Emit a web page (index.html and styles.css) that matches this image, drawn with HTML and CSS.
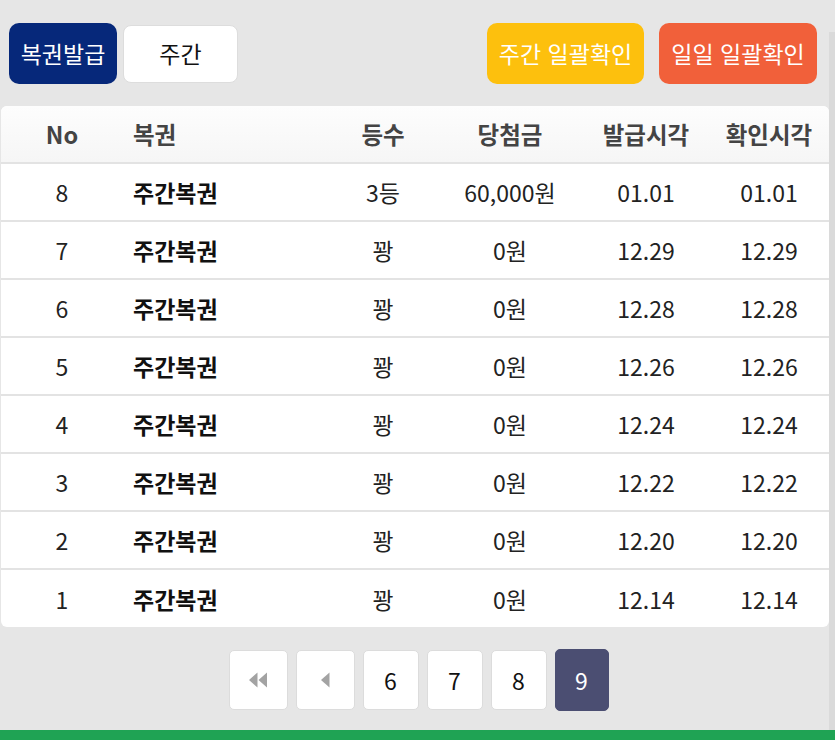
FILE: index.html
```html
<!DOCTYPE html>
<html lang="ko">
<head>
<meta charset="utf-8">
<link rel="stylesheet" href="styles.css">
</head>
<body>
<div class="page">
  <div class="main">
    <div class="toolbar">
      <div class="group">
        <button class="btn btn-navy">복권발급</button>
        <button class="btn btn-white">주간</button>
      </div>
      <div class="group group-right">
        <button class="btn btn-yellow">주간 일괄확인</button>
        <button class="btn btn-orange">일일 일괄확인</button>
      </div>
    </div>

    <div class="table">
      <div class="row head">
        <div class="c c1">No</div>
        <div class="c c2">복권</div>
        <div class="c c3">등수</div>
        <div class="c c4">당첨금</div>
        <div class="c c5">발급시각</div>
        <div class="c c6">확인시각</div>
      </div>
      <div class="row"><div class="c c1">8</div><div class="c c2 name">주간복권</div><div class="c c3">3등</div><div class="c c4">60,000원</div><div class="c c5">01.01</div><div class="c c6">01.01</div></div>
      <div class="row"><div class="c c1">7</div><div class="c c2 name">주간복권</div><div class="c c3">꽝</div><div class="c c4">0원</div><div class="c c5">12.29</div><div class="c c6">12.29</div></div>
      <div class="row"><div class="c c1">6</div><div class="c c2 name">주간복권</div><div class="c c3">꽝</div><div class="c c4">0원</div><div class="c c5">12.28</div><div class="c c6">12.28</div></div>
      <div class="row"><div class="c c1">5</div><div class="c c2 name">주간복권</div><div class="c c3">꽝</div><div class="c c4">0원</div><div class="c c5">12.26</div><div class="c c6">12.26</div></div>
      <div class="row"><div class="c c1">4</div><div class="c c2 name">주간복권</div><div class="c c3">꽝</div><div class="c c4">0원</div><div class="c c5">12.24</div><div class="c c6">12.24</div></div>
      <div class="row"><div class="c c1">3</div><div class="c c2 name">주간복권</div><div class="c c3">꽝</div><div class="c c4">0원</div><div class="c c5">12.22</div><div class="c c6">12.22</div></div>
      <div class="row"><div class="c c1">2</div><div class="c c2 name">주간복권</div><div class="c c3">꽝</div><div class="c c4">0원</div><div class="c c5">12.20</div><div class="c c6">12.20</div></div>
      <div class="row last"><div class="c c1">1</div><div class="c c2 name">주간복권</div><div class="c c3">꽝</div><div class="c c4">0원</div><div class="c c5">12.14</div><div class="c c6">12.14</div></div>
    </div>

    <div class="pager">
      <button class="pg pg-wide" aria-label="처음">
        <svg width="22" height="18" viewBox="0 0 22 18"><path d="M10.5 1.5 L2 9 L10.5 16.5 Z M20 1.5 L11.5 9 L20 16.5 Z" fill="#a3a3a3"/></svg>
      </button>
      <button class="pg pg-wide" aria-label="이전">
        <svg width="12" height="18" viewBox="0 0 12 18"><path d="M10.5 1.5 L2 9 L10.5 16.5 Z" fill="#a3a3a3"/></svg>
      </button>
      <button class="pg">6</button>
      <button class="pg">7</button>
      <button class="pg">8</button>
      <button class="pg pg-active">9</button>
    </div>
  </div>
  <div class="scrolltrack"></div>
</div>
<div class="footer-bar"></div>
</body>
</html>
```

FILE: styles.css
```css
html, body {
  margin: 0;
  padding: 0;
}
body {
  background: #e6e6e6;
  font-family: "Noto Sans CJK KR", "Noto Sans", sans-serif;
  color: #222;
  width: 835px;
  height: 740px;
  overflow: hidden;
  display: flex;
  flex-direction: column;
}
.page {
  display: flex;
  flex: 1;
}
.main {
  width: 829px;
  display: flex;
  flex-direction: column;
}
.scrolltrack {
  width: 6px;
  margin-top: 32px;
  background: #dadada;
}
.toolbar {
  display: flex;
  justify-content: space-between;
  padding: 23px 12px 0 9px;
  height: 61px;
}
.group {
  display: flex;
  gap: 6px;
  align-items: center;
}
.group-right {
  gap: 15px;
}
.btn {
  font-family: inherit;
  font-size: 23px;
  border: none;
  border-radius: 10px;
  height: 61px;
  padding: 0;
  line-height: 1;
  cursor: pointer;
  white-space: nowrap;
}
.btn-navy {
  background: #06287a;
  color: #fff;
  width: 108px;
}
.btn-white {
  background: #fff;
  color: #111;
  width: 115px;
  height: 58px;
  border: 1px solid #ddd;
  border-radius: 8px;
}
.btn-yellow {
  background: #fdc00d;
  color: #fff;
  width: 157px;
}
.btn-orange {
  background: #f1603a;
  color: #fff;
  width: 158px;
}
.table {
  margin: 22px 0 0 1px;
  width: 828px;
  background: #fff;
  border-radius: 6px;
  overflow: hidden;
}
.row {
  display: flex;
  height: 56px;
  align-items: center;
  border-bottom: 2px solid #e3e3e3;
  font-size: 23px;
}
.row.last {
  border-bottom: none;
  height: 57px;
}
.row.head {
  background: linear-gradient(#fdfdfd, #f6f6f6);
  color: #444;
  font-weight: 700;
  font-size: 23.5px;
  height: 56px;
}
.c {
  text-align: center;
  white-space: nowrap;
}
.c1 { width: 122px; }
.c2 { width: 187px; text-align: left; padding-left: 10px; }
.c3 { width: 126px; }
.c4 { width: 128px; }
.c5 { width: 144px; }
.c6 { width: 102px; }
.name {
  font-weight: 700;
  color: #111;
}
.pager {
  display: flex;
  justify-content: center;
  gap: 8px;
  margin-top: 22px;
  padding-left: 8px;
  align-items: center;
}
.pg {
  width: 56px;
  height: 60px;
  background: #fff;
  border: 1px solid #dcdcdc;
  border-radius: 5px;
  font-family: inherit;
  font-size: 23px;
  color: #111;
  padding: 0;
  display: flex;
  align-items: center;
  justify-content: center;
}
.pg-wide {
  width: 59px;
}
.pg-active {
  background: #4b4e72;
  border-color: #4b4e72;
  color: #fff;
  height: 62px;
  width: 54px;
}
.footer-bar {
  height: 10px;
  background: #1fa354;
}
```
